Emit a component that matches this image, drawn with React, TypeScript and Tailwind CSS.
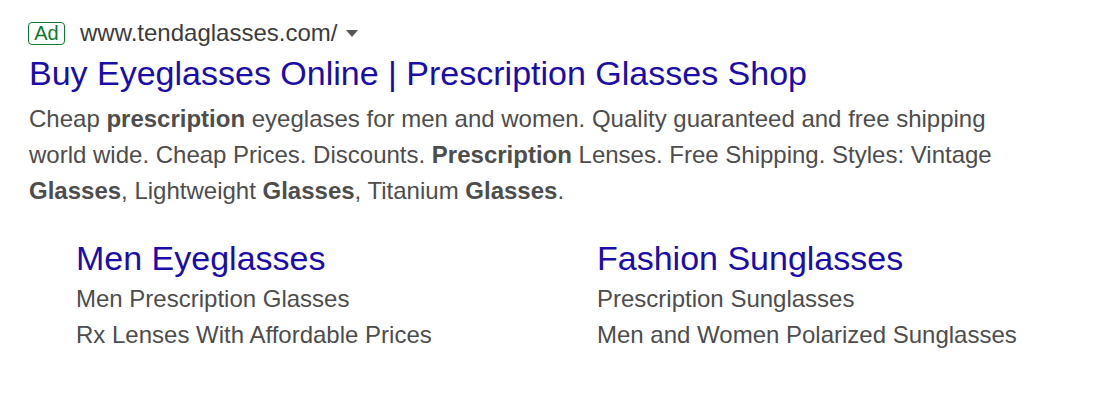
const sitelinks = [
  {
    title: "Men Eyeglasses",
    lines: ["Men Prescription Glasses", "Rx Lenses With Affordable Prices"],
  },
  {
    title: "Fashion Sunglasses",
    lines: ["Prescription Sunglasses", "Men and Women Polarized Sunglasses"],
  },
];

const App = () => {
  return (
    <div className="min-h-screen bg-white pl-[28px] pt-[20px] font-[family-name:'Liberation_Sans',Arial,sans-serif]">
      <div className="flex items-center h-[26px]">
        <span className="border border-[#0b7a2e] text-[#0b7a2e] rounded-[4px] text-[20px] leading-[21px] w-[37px] h-[23px] flex items-center justify-center">
          Ad
        </span>
        <span className="ml-[15px] text-[24px] text-[#3c3c3c]">www.tendaglasses.com/</span>
        <svg className="ml-[9px]" width="12" height="7" viewBox="0 0 12 7">
          <path d="M0 0h12L6 7z" fill="#555" />
        </svg>
      </div>
      <h1 className="text-[34px] leading-[40px] text-[#1a0dab] mt-[7px] pl-[1px]">
        Buy Eyeglasses Online | Prescription Glasses Shop
      </h1>
      <p className="text-[24px] leading-[36px] text-[#4d4d4d] w-[1000px] mt-[8px] pl-[1px]">
        Cheap <b>prescription</b> eyeglases for men and women. Quality guaranteed and free shipping world
        wide. Cheap Prices. Discounts. <b>Prescription</b> Lenses. Free Shipping. Styles: Vintage{" "}
        <b>Glasses</b>, Lightweight <b>Glasses</b>, Titanium <b>Glasses</b>.
      </p>
      <div className="flex pl-[48px] mt-[29px]">
        {sitelinks.map((s) => (
          <div key={s.title} className="w-[522px] first:w-[524px]">
            <div className="text-[34px] leading-[40px] text-[#1a0dab]">{s.title}</div>
            <div className="mt-[3px]">
              {s.lines.map((l) => (
                <div key={l} className="text-[24px] leading-[36px] text-[#4d4d4d]">
                  {l}
                </div>
              ))}
            </div>
          </div>
        ))}
      </div>
    </div>
  );
};

export default App;
